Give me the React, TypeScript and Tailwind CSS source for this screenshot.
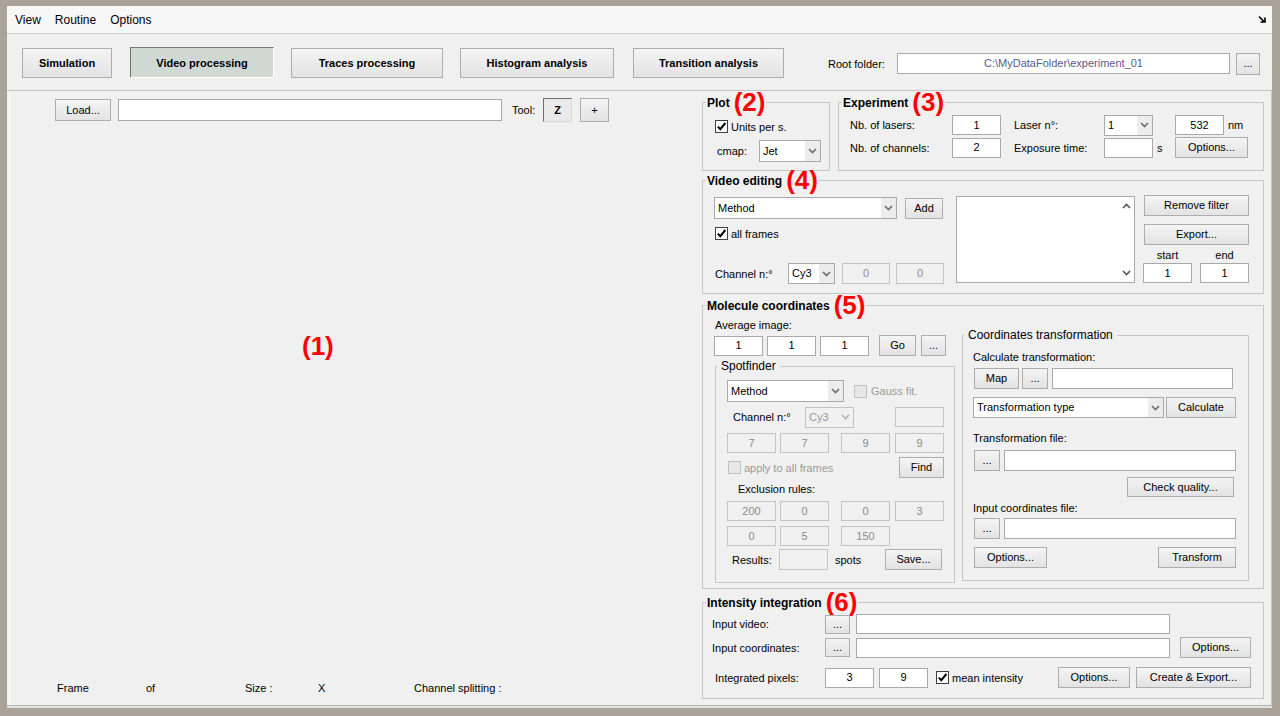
import React from "react";

type P = { c?: string; children?: React.ReactNode };

const Btn = ({ c = "", children }: P) => (
  <div
    className={
      "flex shrink-0 items-center justify-center border border-[#adadad] bg-linear-to-b from-[#f4f4f4] to-[#e3e3e3] text-[11px] leading-none text-black " +
      c
    }
  >
    {children}
  </div>
);

const Input = ({ c = "", children }: P) => (
  <div
    className={
      "flex shrink-0 items-center justify-center border border-[#a9a9a9] bg-white text-[11px] leading-none " +
      c
    }
  >
    {children}
  </div>
);

const Dis = ({ c = "", children }: P) => (
  <div
    className={
      "flex shrink-0 items-center justify-center border border-[#c2c2c2] bg-[#f0f0f0] text-[11px] leading-none text-[#8c8c8c] " +
      c
    }
  >
    {children}
  </div>
);

const Chevron = ({ color = "#6e6e6e", up = false }: { color?: string; up?: boolean }) => (
  <svg width="9" height="6" viewBox="0 0 9 6">
    <path d={up ? "M1 5 L4.5 1.5 L8 5" : "M1 1 L4.5 4.5 L8 1"} fill="none" stroke={color} strokeWidth="1.6" />
  </svg>
);

const Select = ({ c = "", children, off }: P & { off?: boolean }) => (
  <div
    className={
      "flex shrink-0 items-stretch border text-[11px] leading-none " +
      (off ? "border-[#c2c2c2] bg-[#f0f0f0] text-[#9a9a9a] " : "border-[#a9a9a9] bg-white text-black ") +
      c
    }
  >
    <div className="flex flex-1 items-center pl-[3px]">{children}</div>
    <div className={"flex w-[15px] items-center justify-center " + (off ? "bg-[#f0f0f0]" : "bg-[#ececec]")}>
      <Chevron color={off ? "#b0b0b0" : "#6e6e6e"} />
    </div>
  </div>
);

const Check = ({ on, off }: { on?: boolean; off?: boolean }) => (
  <div
    className={
      "flex h-[13px] w-[13px] shrink-0 items-center justify-center border " +
      (off ? "border-[#c0c0c0] bg-[#e8e8e8]" : "border-[#3f3f3f] bg-white")
    }
  >
    {on && (
      <svg width="11" height="11" viewBox="0 0 11 11">
        <path d="M1.8 5.6 L4.3 8.2 L9.4 2" fill="none" stroke="#000" strokeWidth="2" />
      </svg>
    )}
  </div>
);

const Panel = ({
  title,
  num,
  c = "",
  children,
  sub,
}: P & { title: string; num?: string; sub?: boolean }) => (
  <fieldset className={"shrink-0 border border-[#c6c6c6] " + c}>
    <legend className={"flex h-[14px] items-center " + (sub ? "ml-[1px] px-[4px]" : "ml-[3px] px-[1px]")}>
      <span className={"text-[12px] leading-[14px] " + (sub ? "font-normal" : "translate-y-[1px] font-bold")}>{title}</span>
      {num && <span className="ml-[4px] text-[26px] font-bold leading-[14px] text-[#f00]">{num}</span>}
    </legend>
    {children}
  </fieldset>
);

const Label = ({ c = "", children }: P) => (
  <span className={"shrink-0 text-[11px] leading-[14px] " + c}>{children}</span>
);

export default function App() {
  return (
    <div className="h-[716px] w-[1280px] overflow-hidden bg-[#aba399] pb-[8px] pl-[7px] pr-[8px] pt-[6px] font-['Liberation_Sans',Arial,sans-serif] text-[11px] text-black">
      <div className="flex h-[702px] flex-col bg-[#f0f0f0]">
        {/* menu */}
        <div className="flex h-[28px] shrink-0 items-center gap-[14px] border-b border-[#cbcbcb] bg-[#f7f7f7] pl-[8px] text-[12px]">
          <span>View</span>
          <span>Routine</span>
          <span>Options</span>
          <svg className="ml-auto mr-[5px]" width="9" height="9" viewBox="0 0 9 9">
            <path d="M1 1.5 L6.5 7 M7 2.5 L7 7 L2.5 7" fill="none" stroke="#000" strokeWidth="1.6" />
          </svg>
        </div>

        {/* tabs */}
        <div className="flex h-[57px] shrink-0 items-start border-b border-[#c4c4c4] pt-[14px]">
          <Btn c="ml-[15px] w-[90px] h-[30px] font-bold">Simulation</Btn>
          <div className="ml-[18px] flex h-[31px] w-[144px] shrink-0 items-center justify-center border border-[#747474] border-b-white border-r-white bg-[#cfd8d3] pt-[1px] text-[11px] font-bold leading-none -mt-[1px]">
            Video processing
          </div>
          <Btn c="ml-[17px] w-[152px] h-[30px] font-bold">Traces processing</Btn>
          <Btn c="ml-[17px] w-[154px] h-[30px] font-bold">Histogram analysis</Btn>
          <Btn c="ml-[19px] w-[151px] h-[30px] font-bold">Transition analysis</Btn>
          <div className="ml-[44px] mt-[5px] flex h-[21px] items-center">
            <Label c="w-[69px]">Root folder:</Label>
            <Input c="w-[333px] h-[21px] text-[#5a5a8c]">{"C:\\MyDataFolder\\experiment_01"}</Input>
            <Btn c="ml-[6px] w-[24px] h-[22px]">...</Btn>
          </div>
        </div>

        {/* main */}
        <div className="flex h-[614px] shrink-0 border-r border-[#c4c4c4] pr-[6px]">
          {/* left pane */}
          <div className="ml-[2px] flex w-[693px] shrink-0 flex-col border-l border-white">
            <div className="mt-[7px] flex h-[24px] items-center">
              <Btn c="ml-[45px] w-[56px] h-[22px]">Load...</Btn>
              <Input c="ml-[7px] w-[384px] h-[22px]" />
              <Label c="ml-[10px] w-[31px]">Tool:</Label>
              <div className="flex h-[24px] w-[29px] shrink-0 items-center justify-center border border-[#6f6f6f] border-b-[#d8d8d8] border-r-[#d8d8d8] bg-[#eaeaea] text-[11px] font-bold">
                Z
              </div>
              <Btn c="ml-[8px] w-[29px] h-[24px]">+</Btn>
            </div>
            <div className="ml-[292px] mt-[211px] text-[26px] font-bold leading-[26px] text-[#f00]">(1)</div>
            <div className="mb-[10px] ml-[47px] mt-auto flex h-[14px] items-center">
              <Label c="w-[89px]">Frame</Label>
              <Label c="w-[99px]">of</Label>
              <Label c="w-[73px]">Size :</Label>
              <Label c="w-[96px]">X</Label>
              <Label>Channel splitting :</Label>
            </div>
          </div>

          {/* right column */}
          <div className="flex w-[562px] shrink-0 flex-col">
            <div className="mt-[4px] flex">
              <Panel title="Plot" num="(2)" c="w-[128px] h-[76px]">
                <div className="ml-[12px] mt-[11px] flex h-[13px] items-center">
                  <Check on />
                  <Label c="ml-[3px]">Units per s.</Label>
                </div>
                <div className="ml-[14px] mt-[7px] flex h-[22px] items-center">
                  <Label c="w-[42px]">cmap:</Label>
                  <Select c="w-[62px] h-[22px]">Jet</Select>
                </div>
              </Panel>
              <Panel title="Experiment" num="(3)" c="ml-[8px] w-[426px] h-[76px]">
                <div className="mt-[6px] flex h-[20px] items-center">
                  <Label c="ml-[11px] w-[102px]">Nb. of lasers:</Label>
                  <Input c="w-[49px] h-[20px]">1</Input>
                  <Label c="ml-[13px] w-[90px]">Laser n°:</Label>
                  <Select c="w-[49px] h-[21px]">1</Select>
                  <Input c="ml-[22px] w-[49px] h-[20px]">532</Input>
                  <Label c="ml-[4px]">nm</Label>
                </div>
                <div className="mt-[2px] flex h-[21px] items-center">
                  <Label c="ml-[11px] w-[102px]">Nb. of channels:</Label>
                  <Input c="w-[49px] h-[20px]">2</Input>
                  <Label c="ml-[13px] w-[90px]">Exposure time:</Label>
                  <Input c="w-[49px] h-[20px]" />
                  <Label c="w-[22px] pl-[4px]">s</Label>
                  <Btn c="w-[73px] h-[21px]">Options...</Btn>
                </div>
              </Panel>
            </div>

            <Panel title="Video editing" num="(4)" c="mt-[2px] w-[562px] h-[121px]">
              <div className="flex items-start">
                <div className="ml-[11px] flex w-[231px] shrink-0 flex-col">
                  <div className="mt-[10px] flex items-center">
                    <Select c="w-[183px] h-[22px]">Method</Select>
                    <Btn c="ml-[8px] w-[38px] h-[21px]">Add</Btn>
                  </div>
                  <div className="ml-[1px] mt-[8px] flex h-[13px] items-center">
                    <Check on />
                    <Label c="ml-[3px]">all frames</Label>
                  </div>
                  <div className="mt-[23px] flex h-[21px] items-center">
                    <Label c="ml-[1px] w-[73px]">Channel n:°</Label>
                    <Select c="w-[47px] h-[21px]">Cy3</Select>
                    <Dis c="ml-[7px] w-[48px] h-[21px]">0</Dis>
                    <Dis c="ml-[6px] w-[48px] h-[21px]">0</Dis>
                  </div>
                </div>
                <div className="ml-[11px] mt-[9px] flex h-[87px] w-[179px] shrink-0 justify-end border border-[#a9a9a9] bg-white">
                  <div className="flex w-[16px] flex-col items-center justify-between py-[6px]">
                    <Chevron up color="#555" />
                    <Chevron color="#555" />
                  </div>
                </div>
                <div className="ml-[8px] mt-[8px] flex w-[106px] shrink-0 flex-col">
                  <Btn c="ml-[1px] w-[105px] h-[21px]">Remove filter</Btn>
                  <Btn c="ml-[1px] mt-[8px] w-[105px] h-[21px]">Export...</Btn>
                  <div className="mt-[3px] flex h-[14px]">
                    <Label c="w-[49px] text-center">start</Label>
                    <Label c="ml-[8px] w-[49px] text-center">end</Label>
                  </div>
                  <div className="mt-[1px] flex">
                    <Input c="w-[49px] h-[20px]">1</Input>
                    <Input c="ml-[8px] w-[49px] h-[20px]">1</Input>
                  </div>
                </div>
              </div>
            </Panel>

            <Panel title="Molecule coordinates" num="(5)" c="mt-[4px] w-[562px] h-[291px]">
              <div className="flex items-start">
                <div className="ml-[11px] flex w-[241px] shrink-0 flex-col">
                  <Label c="ml-[1px] mt-[6px] h-[14px]">Average image:</Label>
                  <div className="mt-[3px] flex h-[21px] items-center">
                    <Input c="w-[49px] h-[20px]">1</Input>
                    <Input c="ml-[4px] w-[49px] h-[20px]">1</Input>
                    <Input c="ml-[4px] w-[49px] h-[20px]">1</Input>
                    <Btn c="ml-[10px] w-[37px] h-[21px]">Go</Btn>
                    <Btn c="ml-[5px] w-[25px] h-[21px]">...</Btn>
                  </div>
                  <Panel title="Spotfinder" sub c="ml-[1px] mt-[3px] w-[240px] h-[224px]">
                    <div className="mt-[7px] flex h-[22px] items-center">
                      <Select c="ml-[11px] w-[117px] h-[22px]">Method</Select>
                      <div className="ml-[10px]">
                        <Check off />
                      </div>
                      <Label c="ml-[4px] text-[#9a9a9a]">Gauss fit.</Label>
                    </div>
                    <div className="mt-[5px] flex h-[20px] items-center">
                      <Label c="ml-[17px] w-[72px]">Channel n:°</Label>
                      <Select off c="w-[49px] h-[21px]">Cy3</Select>
                      <Dis c="ml-[41px] w-[49px] h-[20px]" />
                    </div>
                    <div className="mt-[6px] flex">
                      <Dis c="ml-[11px] w-[49px] h-[20px]">7</Dis>
                      <Dis c="ml-[4px] w-[49px] h-[20px]">7</Dis>
                      <Dis c="ml-[12px] w-[49px] h-[20px]">9</Dis>
                      <Dis c="ml-[5px] w-[49px] h-[20px]">9</Dis>
                    </div>
                    <div className="mt-[4px] flex h-[21px] items-center">
                      <div className="ml-[12px]">
                        <Check off />
                      </div>
                      <Label c="ml-[3px] text-[#9a9a9a]">apply to all frames</Label>
                      <Btn c="ml-auto mr-[10px] w-[45px] h-[21px]">Find</Btn>
                    </div>
                    <Label c="ml-[22px] mt-[4px] block h-[14px]">Exclusion rules:</Label>
                    <div className="mt-[5px] flex">
                      <Dis c="ml-[11px] w-[49px] h-[20px]">200</Dis>
                      <Dis c="ml-[4px] w-[49px] h-[20px]">0</Dis>
                      <Dis c="ml-[12px] w-[49px] h-[20px]">0</Dis>
                      <Dis c="ml-[5px] w-[49px] h-[20px]">3</Dis>
                    </div>
                    <div className="mt-[5px] flex">
                      <Dis c="ml-[11px] w-[49px] h-[20px]">0</Dis>
                      <Dis c="ml-[4px] w-[49px] h-[20px]">5</Dis>
                      <Dis c="ml-[12px] w-[49px] h-[20px]">150</Dis>
                    </div>
                    <div className="mt-[3px] flex h-[21px] items-center">
                      <Label c="ml-[16px] w-[47px]">Results:</Label>
                      <Dis c="w-[49px] h-[21px]" />
                      <Label c="ml-[7px]">spots</Label>
                      <Btn c="ml-auto mr-[12px] w-[57px] h-[21px]">Save...</Btn>
                    </div>
                  </Panel>
                </div>

                <Panel title="Coordinates transformation" sub c="ml-[7px] mt-[16px] w-[287px] h-[253px]">
                  <Label c="ml-[10px] mt-[8px] block h-[14px]">Calculate transformation:</Label>
                  <div className="mt-[4px] flex h-[21px] items-center">
                    <Btn c="ml-[11px] w-[45px] h-[21px]">Map</Btn>
                    <Btn c="ml-[3px] w-[26px] h-[21px]">...</Btn>
                    <Input c="ml-[4px] w-[181px] h-[21px]" />
                  </div>
                  <div className="mt-[8px] flex h-[21px] items-center">
                    <Select c="ml-[10px] w-[191px] h-[21px]">Transformation type</Select>
                    <Btn c="ml-[2px] w-[70px] h-[21px]">Calculate</Btn>
                  </div>
                  <Label c="ml-[10px] mt-[13px] block h-[14px]">Transformation file:</Label>
                  <div className="mt-[5px] flex h-[21px] items-center">
                    <Btn c="ml-[11px] w-[26px] h-[21px]">...</Btn>
                    <Input c="ml-[4px] w-[232px] h-[21px]" />
                  </div>
                  <div className="mt-[6px] flex">
                    <Btn c="ml-[164px] w-[107px] h-[20px]">Check quality...</Btn>
                  </div>
                  <Label c="ml-[10px] mt-[4px] block h-[14px]">Input coordinates file:</Label>
                  <div className="mt-[3px] flex h-[21px] items-center">
                    <Btn c="ml-[11px] w-[26px] h-[21px]">...</Btn>
                    <Input c="ml-[4px] w-[232px] h-[21px]" />
                  </div>
                  <div className="mt-[8px] flex">
                    <Btn c="ml-[11px] w-[73px] h-[21px]">Options...</Btn>
                    <Btn c="ml-[111px] w-[78px] h-[21px]">Transform</Btn>
                  </div>
                </Panel>
              </div>
            </Panel>

            <Panel title="Intensity integration" num="(6)" c="mt-[6px] w-[562px] h-[104px]">
              <div className="mt-[5px] flex h-[20px] items-center">
                <Label c="ml-[9px] w-[113px]">Input video:</Label>
                <Btn c="w-[25px] h-[19px]">...</Btn>
                <Input c="ml-[6px] w-[314px] h-[20px]" />
              </div>
              <div className="mt-[3px] flex h-[21px] items-center">
                <Label c="ml-[9px] w-[113px]">Input coordinates:</Label>
                <Btn c="w-[25px] h-[19px]">...</Btn>
                <Input c="ml-[6px] w-[314px] h-[20px]" />
                <Btn c="ml-[10px] w-[71px] h-[21px]">Options...</Btn>
              </div>
              <div className="mt-[9px] flex h-[21px] items-center pr-[12px]">
                <Label c="ml-[12px] w-[110px]">Integrated pixels:</Label>
                <Input c="w-[49px] h-[20px]">3</Input>
                <Input c="ml-[5px] w-[49px] h-[20px]">9</Input>
                <div className="ml-[8px]">
                  <Check on />
                </div>
                <Label c="ml-[3px]">mean intensity</Label>
                <Btn c="ml-auto w-[72px] h-[21px]">Options...</Btn>
                <Btn c="ml-[6px] w-[115px] h-[21px]">Create &amp; Export...</Btn>
              </div>
            </Panel>
          </div>
        </div>
        <div className="h-[3px] shrink-0 border-t border-[#b4b4b4] bg-[#e2e2e2]" />
      </div>
    </div>
  );
}
